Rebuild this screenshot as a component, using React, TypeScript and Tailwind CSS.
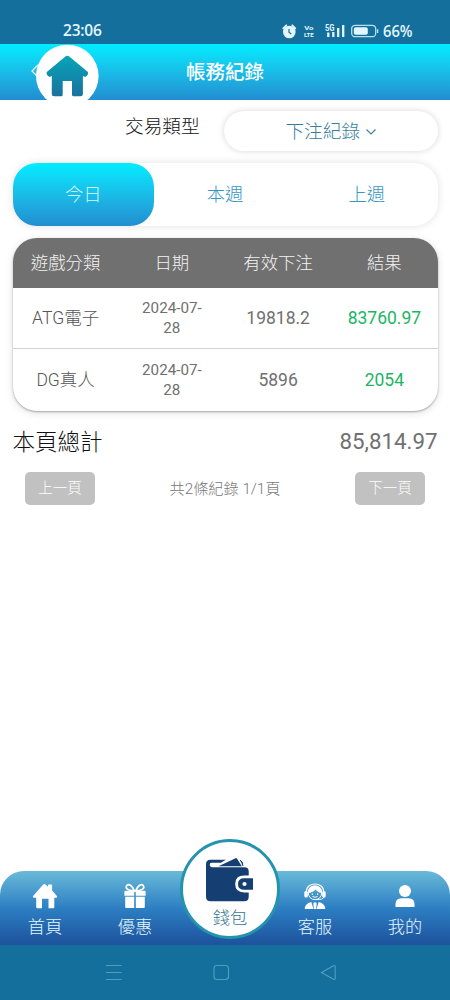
import React from "react";

const rows = [
  { game: "ATG電子", bet: "19818.2", result: "83760.97" },
  { game: "DG真人", bet: "5896", result: "2054" },
];

function StatusBar() {
  return (
    <div className="flex h-[44px] shrink-0 items-start bg-[#146f9d] pt-[21px] pl-[63px] text-[#e3f6fb]">
      <span className="w-[218px] font-['Open_Sans',sans-serif] text-[15.5px] leading-[19px] font-semibold tracking-[-0.2px]">23:06</span>
      <svg width="134" height="20" viewBox="281 20 134 20" fill="none" className="shrink-0 overflow-visible">
        <circle cx="289.3" cy="31" r="6.3" fill="#e3f6fb" />
        <path d="M283.3 27.3l3-3M295.3 27.3l-3-3" stroke="#e3f6fb" strokeWidth="1.8" strokeLinecap="round" />
        <path d="M289 28v3.3l2.2 1.6" stroke="#146f9d" strokeWidth="1.2" />
        <g fill="#e3f6fb" fontFamily="Roboto, sans-serif" fontWeight="700">
          <text x="304.2" y="28.8" fontSize="6" textLength="9.3" lengthAdjust="spacingAndGlyphs">Vo</text>
          <text x="304" y="36.4" fontSize="6" textLength="9.8" lengthAdjust="spacingAndGlyphs">LTE</text>
          <text x="325" y="29.5" fontSize="8.5" textLength="9.5" lengthAdjust="spacingAndGlyphs">5G</text>
          <text x="383" y="35.6" fontSize="15.5" fontFamily="Open Sans, sans-serif" fontWeight="600" textLength="29.5" lengthAdjust="spacingAndGlyphs">66%</text>
        </g>
        <path d="M328.3 36v-4.5M333.3 36v-5M338.2 36v-9M343.2 36v-12" stroke="#e3f6fb" strokeWidth="2.3" />
        <rect x="351.7" y="24.3" width="24" height="11.4" rx="3.5" stroke="#b9dfec" strokeWidth="1.3" />
        <rect x="353.8" y="26.3" width="14" height="7.4" rx="1.8" fill="#e3f6fb" />
        <path d="M377.6 28.2v3.8" stroke="#b9dfec" strokeWidth="1.4" />
      </svg>
    </div>
  );
}

function Header() {
  return (
    <header className="relative flex h-[55.5px] shrink-0 items-center justify-center bg-linear-to-b from-[#00edff] to-[#228dd0]">
      <h1 className="pt-[2px] text-[19.5px] font-medium text-white">帳務紀錄</h1>
      <svg className="absolute top-0 left-[30px]" width="70" height="64" viewBox="30 44 70 64">
        <defs>
          <linearGradient id="house" x1="0" y1="0" x2="0" y2="1">
            <stop offset="0" stopColor="#07a5b8" />
            <stop offset="1" stopColor="#19719e" />
          </linearGradient>
        </defs>
        <path d="M38 65l-6 6 6 6" fill="none" stroke="#fff" strokeWidth="1.2" />
        <circle cx="67.3" cy="76" r="31.3" fill="#fff" />
        <path
          d="M65.4 56.4q1.9-1.5 3.8 0l18.4 15.4q1 1 .3 2.4l-1.2 1.8q-1 1.2-2.5.6l-1.3-.7v18q0 2.4-2.4 2.4h-7q-1.5 0-1.5-1.5V81h-9.3v13.8q0 1.5-1.5 1.5h-7q-2.4 0-2.4-2.4v-18l-1.3.7q-1.5.6-2.5-.6l-1.2-1.8q-.7-1.4.3-2.4z"
          fill="url(#house)"
        />
      </svg>
    </header>
  );
}

function Filters() {
  return (
    <>
      <div className="flex h-[40px] items-center pl-[112.5px]">
        <span className="mb-[7px] w-[99px] text-[18.7px] font-light whitespace-nowrap text-[#111]">交易類型</span>
        <button className="flex h-[40px] flex-1 items-center justify-center gap-[6px] rounded-full bg-white pt-[2px] text-[18.7px] font-light text-[#397d9c] shadow-[0_0_6px_rgba(0,0,0,0.16)]">
          下注紀錄
          <svg width="10" height="6" viewBox="0 0 10 6" fill="none" stroke="currentColor" strokeWidth="1.1">
            <path d="M.5 .5L5 5 9.5.5" />
          </svg>
        </button>
      </div>
      <div className="mt-[12px] grid h-[63px] grid-cols-3 rounded-[24px] bg-white text-[18.3px] font-light text-[#3996c4] shadow-[0_0_8px_rgba(0,0,0,0.12)]">
        <button className="rounded-[24px] bg-linear-to-b from-[#00edff] to-[#228dd0] pt-px text-[#d9f6fd]">今日</button>
        <button className="pt-px">本週</button>
        <button className="pt-px">上週</button>
      </div>
    </>
  );
}

function Records() {
  return (
    <div className="mt-[12px] overflow-hidden rounded-[24px] bg-white text-center shadow-[0_1px_2px_rgba(0,0,0,0.3),0_2px_8px_rgba(0,0,0,0.12)]">
      <div className="grid h-[49.5px] grid-cols-4 items-center bg-[#707070] text-[17.4px] font-light text-[#f2f2f2]">
        <span>遊戲分類</span>
        <span>日期</span>
        <span>有效下注</span>
        <span>結果</span>
      </div>
      {rows.map((row) => (
        <div
          key={row.game}
          className="grid h-[61.5px] grid-cols-4 items-center border-b-[1.5px] border-[#d3d3d3] pt-px text-[17.5px] font-light text-[#555] last:border-b-0"
        >
          <span>{row.game}</span>
          <span className="text-[15.2px] leading-[20px] font-normal text-[#707070]">
            2024-07-
            <br />
            28
          </span>
          <span className="font-normal text-[#707070]">{row.bet}</span>
          <span className="font-normal text-[#1bb565]">{row.result}</span>
        </div>
      ))}
    </div>
  );
}

function Summary() {
  return (
    <>
      <div className="mt-[14px] flex h-[33px] items-center justify-between pt-[2px]">
        <span className="pt-px text-[22.5px] font-light text-[#111]">本頁總計</span>
        <span className="text-[22.3px] text-[#707070]">85,814.97</span>
      </div>
      <div className="mt-[14px] flex h-[33px] items-center justify-between px-[12.5px] font-light">
        <button className="h-[33px] w-[70px] rounded-[5px] bg-[#c1c1c1] pt-[2px] text-[14.5px] text-white">上一頁</button>
        <span className="pt-[2px] text-[15.2px] text-[#777]">共2條紀錄 1/1頁</span>
        <button className="h-[33px] w-[70px] rounded-[5px] bg-[#c1c1c1] pt-[2px] text-[14.5px] text-white">下一頁</button>
      </div>
    </>
  );
}

const HomeIcon = () => (
  <svg width="26" height="26" viewBox="0 0 26 26" fill="white">
    <path d="M11.2 1.4q1.1-1 2.2 0L16 3.800V2.3q0-.8.8-.8h2.5q.8 0 .8.8v5.3l4.8 5.3q.8 1.600-.8 1.800h-1.800v9.600q0 1-1 1h-4.800v-9.500h-6.500v9.500H5.200q-1 0-1-1v-9.600H1.900q-1.700-.2-.8-1.800z" />
  </svg>
);

const GiftIcon = () => (
  <svg width="24" height="26" viewBox="0 0 24 26" fill="white">
    <path d="M2.3 7.8h8.9v5H1.4V8.8q0-1 .9-1zm10.5 0h8.9q.9 0 .9 1v4h-9.8zM2.2 13.8h9V25H3q-.8 0-.8-1zm10.6 0h9V24q0 1-.8 1h-8.2z" />
    <path d="M11.5 8C3.8 7.2 2.2 5 3.8 2.6 5.8 0 9.5 3.2 11.5 8zM12.5 8c7.7-.8 9.3-3 7.7-5.4C18.2 0 14.5 3.2 12.5 8z" fill="none" stroke="white" strokeWidth="1.7" />
  </svg>
);

const SupportIcon = () => (
  <svg width="24" height="27" viewBox="0 0 24 27" fill="none">
    <path d="M3.5 9C3 3.5 7.5 1 12 1s9 2.5 8.5 8" stroke="white" strokeWidth="1.2" />
    <circle cx="12" cy="10" r="6.7" stroke="white" strokeWidth="1" />
    <path d="M5 10C4.5 5 8 2.5 12 2.5S19.5 5 19 10C16.5 9.8 14 8.5 12.5 6.5 11 9 7.5 9.8 5 10z" fill="white" />
    <rect x="1.3" y="8" width="3.5" height="6.5" rx="1.5" fill="white" />
    <rect x="19.2" y="8" width="3.5" height="6.5" rx="1.5" fill="white" />
    <path d="M21 14q-1 3-7.5 2.3M9.5 13.5q2.5 1.600 5 0" stroke="white" strokeWidth="1" />
    <path d="M8.800 11.300h1.200M14 11.300h1.200" stroke="white" strokeWidth="1.4" />
    <path d="M1.800 26q0-5.500 6.500-7l2.200 7zM22.200 26q0-5.500-6.500-7l-2.200 7zM10.600 19.400h2.800l.3 1.600-.6 5h-2.200l-.6-5z" fill="white" />
  </svg>
);

const UserIcon = () => (
  <svg width="22" height="26" viewBox="0 0 22 26" fill="white">
    <circle cx="11" cy="8" r="6" />
    <path d="M1.5 24v-2.8q0-6 6-6h7q6 0 6 6V24z" />
  </svg>
);

const WalletIcon = () => (
  <svg width="48" height="44" viewBox="0 0 48 44">
    <path d="M4.3 1.8H20L14.8 4.8H5.6q-1.9 0-1.9 1.9T5.6 9.2H38.5q4.2 0 4.2 4.2v4.2h-4.5q-9 0-9 8.4t9 8.4h4.5v4.3q0 4.5-4.5 4.5H4.7Q0 43.2 0 38.7V6.3Q0 1.8 4.3 1.8z" fill="#153f72" />
    <path d="M12.5 8.3L29.500.2q1-.4 1.600.5l4.700 7.600z" fill="#153f72" />
    <path d="M34.3 2.2q2.7 1.5 2.5 5.5-.6-3.2-2.5-5.5z" stroke="#153f72" strokeWidth="1" fill="#153f72" />
    <path d="M47 20.2h-8.800q-6.200 0-6.200 5.800t6.200 5.800H47z" fill="#153f72" />
    <circle cx="38.5" cy="26" r="2.1" fill="white" />
  </svg>
);

function NavItem({ icon, label }: { icon: React.ReactNode; label: string }) {
  return (
    <button className="flex flex-1 flex-col items-center pt-[11px]">
      <span className="flex h-[28px] items-center">{icon}</span>
      <span className="mt-[5px] text-[17.2px] leading-[25px] font-light text-[#e5f8ff]">{label}</span>
    </button>
  );
}

function BottomNav() {
  return (
    <nav className="relative flex h-[74px] shrink-0 rounded-t-[24px] bg-linear-to-b from-[#69bad8] via-[#2d7fc3] via-50% to-[#1d529c]">
      <NavItem icon={<HomeIcon />} label="首頁" />
      <NavItem icon={<GiftIcon />} label="優惠" />
      <div className="flex-1" />
      <NavItem icon={<SupportIcon />} label="客服" />
      <NavItem icon={<UserIcon />} label="我的" />
      <button className="absolute -top-[32px] left-[180px] flex h-[100px] w-[100px] flex-col items-center rounded-full border-[3px] border-[#2592ae] bg-white pt-[16px] text-[#347494]">
        <WalletIcon />
        <span className="mt-[4px] text-[17.2px] leading-[25px] font-light">錢包</span>
      </button>
    </nav>
  );
}

function SystemNav() {
  return (
    <div className="flex h-[55px] shrink-0 justify-center bg-[#146f9d]">
      <svg width="450" height="55" viewBox="0 945 450 55" fill="none" stroke="#4fa0bd" strokeWidth="1.1">
        <path d="M106 965.5h15.5M106 972.5h15.5M106 979.5h15.5" />
        <rect x="214" y="965.5" width="14.5" height="14" rx="3" />
        <path d="M321.5 972.5l12-6.700q1.700-.7 1.700 1v11.500q0 1.700-1.700 1z" />
      </svg>
    </div>
  );
}

export default function App() {
  return (
    <div className="flex h-[1000px] w-[450px] flex-col overflow-hidden bg-white font-[Roboto,'Noto_Sans_CJK_TC',sans-serif]">
      <StatusBar />
      <Header />
      <main className="flex-1 px-[12.5px] pt-[11.5px]">
        <Filters />
        <Records />
        <Summary />
      </main>
      <BottomNav />
      <SystemNav />
    </div>
  );
}
